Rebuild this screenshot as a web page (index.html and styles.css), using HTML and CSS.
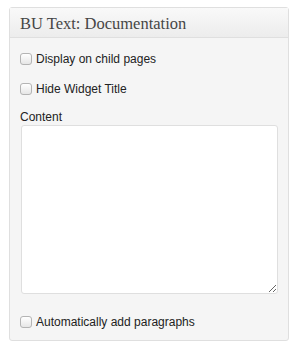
FILE: index.html
```html
<!DOCTYPE html>
<html lang="en">
<head>
    <meta charset="UTF-8">
    <title>BU Text: Documentation</title>
    <link rel="stylesheet" href="styles.css">
</head>
<body>
    <div class="widget">
        <div class="widget-top">
            <h3 class="widget-title">BU Text: Documentation</h3>
        </div>
        <div class="widget-inside">
            <p class="field">
                <input type="checkbox" id="child-pages" class="check">
                <label for="child-pages">Display on child pages</label>
            </p>
            <p class="field">
                <input type="checkbox" id="hide-title" class="check">
                <label for="hide-title">Hide Widget Title</label>
            </p>
            <label class="content-label" for="content">Content</label>
            <textarea id="content" class="content-box"></textarea>
            <p class="field field-last">
                <input type="checkbox" id="autop" class="check">
                <label for="autop">Automatically add paragraphs</label>
            </p>
        </div>
    </div>
</body>
</html>
```

FILE: styles.css
```css
body {
    margin: 0;
    padding: 7px 0 0 9px;
    background: #fff;
    font-family: "Liberation Sans", Arial, sans-serif;
    font-size: 12px;
    color: #333;
}

.widget {
    width: 278px;
    height: 332px;
    border: 1px solid #dfdfdf;
    border-radius: 3px;
    background: #f5f5f5;
    box-shadow: inset 0 1px 0 #fff;
}

.widget-top {
    height: 29px;
    border-bottom: 1px solid #dfdfdf;
    background: linear-gradient(to bottom, #f9f9f9, #ececec);
    display: flex;
    align-items: center;
}

.widget-title {
    margin: 0 0 0 10px;
    padding-top: 2px;
    line-height: 20px;
    font-family: "Liberation Serif", Georgia, serif;
    font-weight: normal;
    font-size: 16.5px;
    color: #464646;
}

.widget-inside {
    padding: 12px 11px 0 10px;
}

.field {
    margin: 0 0 12px;
    display: flex;
    align-items: center;
    height: 18px;
    color: #222;
}

.check {
    width: 12px;
    height: 12px;
    margin: 0 4px 0 0;
    appearance: none;
    border: 1px solid #b4b4b4;
    border-radius: 3px;
    background: linear-gradient(to bottom, #fff, #e6e6e6);
}

.content-label {
    display: block;
    line-height: 15px;
    color: #222;
}

.content-box {
    display: block;
    box-sizing: border-box;
    width: 257px;
    height: 169px;
    margin: 0 0 19px 1px;
    border: 1px solid #dfdfdf;
    border-radius: 3px;
    background: #fff;
}

.field-last {
    margin-bottom: 0;
}
```
